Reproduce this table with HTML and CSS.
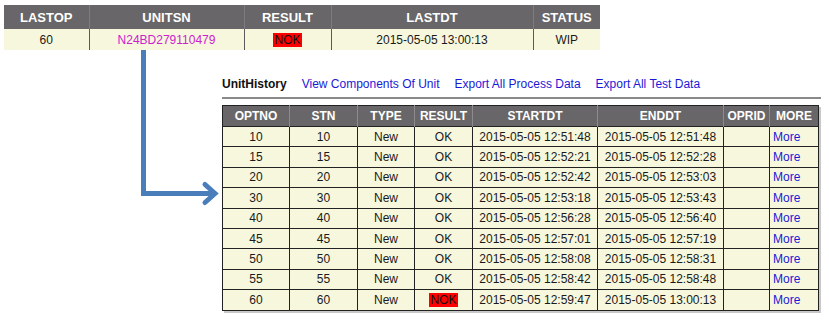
FILE: index.html
```html
<!DOCTYPE html>
<html>
<head>
<meta charset="utf-8">
<link rel="stylesheet" href="styles.css">
</head>
<body>
<div class="page">
  <table class="grid top">
    <colgroup>
      <col class="t1"><col class="t2"><col class="t3"><col class="t4"><col class="t5">
    </colgroup>
    <thead>
      <tr><th>LASTOP</th><th>UNITSN</th><th>RESULT</th><th>LASTDT</th><th>STATUS</th></tr>
    </thead>
    <tbody>
      <tr><td>60</td><td class="sn">N24BD279110479</td><td><span class="nok">NOK</span></td><td>2015-05-05 13:00:13</td><td>WIP</td></tr>
    </tbody>
  </table>

  <div class="history">
    <div class="tabs">
      <span class="tab-title">UnitHistory</span>
      <a class="tab-link" href="#">View Components Of Unit</a>
      <a class="tab-link" href="#">Export All Process Data</a>
      <a class="tab-link" href="#">Export All Test Data</a>
    </div>
    <div class="rule"></div>
    <table class="grid hist">
      <colgroup>
        <col class="h1"><col class="h2"><col class="h3"><col class="h4"><col class="h5"><col class="h6"><col class="h7"><col class="h8">
      </colgroup>
      <thead>
        <tr><th>OPTNO</th><th>STN</th><th>TYPE</th><th>RESULT</th><th>STARTDT</th><th>ENDDT</th><th>OPRID</th><th>MORE</th></tr>
      </thead>
      <tbody>
        <tr><td>10</td><td>10</td><td>New</td><td>OK</td><td>2015-05-05 12:51:48</td><td>2015-05-05 12:51:48</td><td></td><td class="more"><a href="#">More</a></td></tr>
        <tr><td>15</td><td>15</td><td>New</td><td>OK</td><td>2015-05-05 12:52:21</td><td>2015-05-05 12:52:28</td><td></td><td class="more"><a href="#">More</a></td></tr>
        <tr><td>20</td><td>20</td><td>New</td><td>OK</td><td>2015-05-05 12:52:42</td><td>2015-05-05 12:53:03</td><td></td><td class="more"><a href="#">More</a></td></tr>
        <tr><td>30</td><td>30</td><td>New</td><td>OK</td><td>2015-05-05 12:53:18</td><td>2015-05-05 12:53:43</td><td></td><td class="more"><a href="#">More</a></td></tr>
        <tr><td>40</td><td>40</td><td>New</td><td>OK</td><td>2015-05-05 12:56:28</td><td>2015-05-05 12:56:40</td><td></td><td class="more"><a href="#">More</a></td></tr>
        <tr><td>45</td><td>45</td><td>New</td><td>OK</td><td>2015-05-05 12:57:01</td><td>2015-05-05 12:57:19</td><td></td><td class="more"><a href="#">More</a></td></tr>
        <tr><td>50</td><td>50</td><td>New</td><td>OK</td><td>2015-05-05 12:58:08</td><td>2015-05-05 12:58:31</td><td></td><td class="more"><a href="#">More</a></td></tr>
        <tr><td>55</td><td>55</td><td>New</td><td>OK</td><td>2015-05-05 12:58:42</td><td>2015-05-05 12:58:48</td><td></td><td class="more"><a href="#">More</a></td></tr>
        <tr><td>60</td><td>60</td><td>New</td><td><span class="nok">NOK</span></td><td>2015-05-05 12:59:47</td><td>2015-05-05 13:00:13</td><td></td><td class="more"><a href="#">More</a></td></tr>
      </tbody>
    </table>
  </div>

  <svg class="connector" width="829" height="328" viewBox="0 0 829 328">
    <path d="M143.5 50 V193.5 H214" fill="none" stroke="#4a7ebb" stroke-width="5"/>
    <polyline points="205,184.5 215,193.5 205,202.5" fill="none" stroke="#4a7ebb" stroke-width="5" stroke-linecap="round" stroke-linejoin="miter"/>
  </svg>
</div>
</body>
</html>
```

FILE: styles.css
```css
html, body {
  margin: 0;
  padding: 0;
  background: #ffffff;
}

.page {
  position: relative;
  width: 829px;
  height: 328px;
  padding: 5px 0 0 4px;
  box-sizing: border-box;
  font-family: "Liberation Sans", Arial, sans-serif;
  font-size: 12px;
  color: #111;
}

.grid {
  border-collapse: collapse;
  table-layout: fixed;
}

.grid th {
  background: #686668;
  color: #ffffff;
  font-weight: bold;
  text-align: center;
  padding: 0;
  border-left: 1px solid #8c8a8c;
  border-right: 1px solid #8c8a8c;
}

.grid td {
  background: #f7f7de;
  text-align: center;
  padding: 0;
  color: #1a1a1a;
}

/* top table */
.top {
  width: 596px;
}
.top th {
  height: 24px;
  font-size: 13px;
  border-left-color: #7e7c7e;
  border-right-color: #7e7c7e;
}
.top td {
  height: 21px;
  border-left: 1px solid #5a5a5a;
  border-right: 1px solid #5a5a5a;
}
.top th:first-child, .top td:first-child { border-left: none; }
.top th:last-child, .top td:last-child { border-right: none; }

.t1 { width: 85px; }
.t2 { width: 155px; }
.t3 { width: 87px; }
.t4 { width: 202px; }
.t5 { width: 67px; }

.grid td.sn { color: #cc22cc; }

.nok {
  background: #ff0000;
  color: #111;
  padding: 0 1px;
}

/* history section */
.history {
  margin: 26px 0 0 218px;
  width: 599px;
}

.tabs {
  display: flex;
  align-items: center;
  height: 16px;
}

.tab-title {
  font-weight: bold;
  color: #111;
  margin-right: 15px;
}

.tab-link,
.tab-link:visited {
  color: #1a1ad6;
  text-decoration: none;
  margin-right: 15px;
}

.rule {
  margin-top: 5px;
  height: 0;
  border-top: 2px solid #8a8a8a;
  width: 599px;
}

.hist {
  margin-top: 6px;
  width: 596px;
  border: 1px solid #222;
  box-shadow: 2px 2px 0 #c8c8c8;
}

.hist th {
  height: 20px;
}
.hist td {
  height: 19.4px;
  border: 1px solid #222;
}
.hist th:first-child { border-left: none; }
.hist th:last-child { border-right: none; }

.h1 { width: 67px; }
.h2 { width: 68px; }
.h3 { width: 57px; }
.h4 { width: 58px; }
.h5 { width: 125px; }
.h6 { width: 126px; }
.h7 { width: 46px; }
.h8 { width: 49px; }

.grid td.more {
  text-align: left;
  padding-left: 3px;
}
.more a,
.more a:visited {
  color: #1a1ad6;
  text-decoration: none;
}

.connector {
  position: absolute;
  left: 0;
  top: 0;
  pointer-events: none;
}
```
